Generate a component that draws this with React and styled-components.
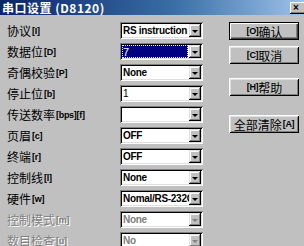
import React from "react";
import styled, { createGlobalStyle, css } from "styled-components";

const GlobalStyle = createGlobalStyle`
  html, body {
    margin: 0;
    padding: 0;
    background: #c0c0c0;
    overflow: hidden;
  }
`;

const Window = styled.div`
  width: 316px;
  height: 246px;
  background: #c0c0c0;
  font-family: "Noto Sans CJK SC", "Liberation Sans", sans-serif;
  font-size: 12px;
  color: #000;
`;

const TitleBar = styled.div`
  height: 15px;
  display: flex;
  align-items: center;
  justify-content: space-between;
  padding: 0 2px;
  background: linear-gradient(90deg, #0a246a 0%, #3a6ea5 55%, #a6caf0 100%);
`;

const Title = styled.div`
  color: #fff;
  font-weight: bold;
  font-size: 12px;
  line-height: 15px;
  letter-spacing: 0.5px;
  white-space: nowrap;
`;

const CloseButton = styled.div`
  width: 16px;
  height: 12px;
  margin-right: 8px;
  background: #c0c0c0;
  box-shadow: inset -1px -1px #000, inset 1px 1px #fff, inset -2px -2px #808080;
  font-family: "Liberation Sans", sans-serif;
  font-size: 10px;
  font-weight: bold;
  line-height: 12px;
  padding-left: 3px;
  box-sizing: border-box;
`;

const Body = styled.div`
  display: flex;
  align-items: flex-start;
  padding: 7px 0 0 7px;
`;

const Form = styled.div`
  display: grid;
  grid-template-columns: 113px 83px;
  grid-auto-rows: 17px;
  row-gap: 4px;
`;

const Label = styled.div`
  display: flex;
  align-items: center;
  white-space: nowrap;
  font-size: 12px;
  color: ${(p) => (p.$disabled ? "#808080" : "#000")};
  text-shadow: ${(p) => (p.$disabled ? "1px 1px 0 #fff" : "none")};
`;

const Key = styled.span`
  font-family: "Liberation Sans", sans-serif;
  font-size: 9px;
  font-weight: bold;
  letter-spacing: -0.3px;
  margin-left: 1px;
`;

const Select = styled.div`
  display: flex;
  align-items: stretch;
  background: #fff;
  padding: 2px;
  box-shadow: inset 1px 1px #808080, inset -1px -1px #fff, inset 2px 2px #000,
    inset -2px -2px #dfdfdf;
`;

const Value = styled.div`
  flex: 1;
  display: flex;
  align-items: center;
  padding-left: 1px;
  overflow: hidden;
  white-space: nowrap;
  font-family: "Liberation Sans", sans-serif;
  font-size: 10px;
  letter-spacing: -0.3px;
  font-weight: ${(p) => (p.$plain ? "normal" : "bold")};
  color: ${(p) => (p.$disabled ? "#808080" : "#000")};
  ${(p) =>
    p.$selected &&
    css`
      background: #000080;
      color: #fff;
      font-size: 11px;
      outline: 1px dotted #ffff80;
      outline-offset: -1px;
      margin-right: 1px;
    `}
`;

const Arrow = styled.div`
  width: 12px;
  flex: none;
  display: flex;
  align-items: center;
  justify-content: center;
  background: #c0c0c0;
  box-shadow: inset -1px -1px #000, inset 1px 1px #dfdfdf, inset -2px -2px #808080,
    inset 2px 2px #fff;
  &::after {
    content: "";
    border-left: 3px solid transparent;
    border-right: 3px solid transparent;
    border-top: 3px solid ${(p) => (p.$disabled ? "#808080" : "#000")};
    margin-top: 1px;
  }
`;

const Buttons = styled.div`
  display: flex;
  flex-direction: column;
  margin-left: 26px;
`;

const Button = styled.div`
  width: 70px;
  height: 18px;
  margin-top: ${(p) => p.$top}px;
  display: flex;
  align-items: center;
  justify-content: center;
  box-sizing: border-box;
  background: #c0c0c0;
  white-space: nowrap;
  font-size: 12px;
  box-shadow: ${(p) =>
    p.$default
      ? "inset 1px 1px #000, inset -1px -1px #000, inset 2px 2px #fff, inset -2px -2px #404040, inset -3px -3px #808080"
      : "inset 1px 1px #fff, inset -1px -1px #000, inset 2px 2px #dfdfdf, inset -2px -2px #808080"};
`;

const rows = [
  { label: "协议", key: "[I]", value: "RS instruction" },
  { label: "数据位", key: "[D]", value: "7", selected: true, plain: true },
  { label: "奇偶校验", key: "[P]", value: "None" },
  { label: "停止位", key: "[b]", value: "1", plain: true },
  { label: "传送数率", key: "[bps][f]", value: "" },
  { label: "页眉", key: "[c]", value: "OFF" },
  { label: "终端", key: "[r]", value: "OFF" },
  { label: "控制线", key: "[l]", value: "None" },
  { label: "硬件", key: "[w]", value: "Nomal/RS-232C" },
  { label: "控制模式", key: "[m]", value: "None", disabled: true },
  { label: "数目检查", key: "[u]", value: "No", disabled: true },
];

export default function App() {
  return (
    <Window>
      <GlobalStyle />
      <TitleBar>
        <Title>串口设置 (D8120)</Title>
        <CloseButton>×</CloseButton>
      </TitleBar>
      <Body>
        <Form>
          {rows.map((r) => (
            <React.Fragment key={r.label}>
              <Label $disabled={r.disabled}>
                {r.label}
                <Key>{r.key}</Key>
              </Label>
              <Select>
                <Value
                  $selected={r.selected}
                  $plain={r.plain}
                  $disabled={r.disabled}
                >
                  {r.value}
                </Value>
                <Arrow $disabled={r.disabled} />
              </Select>
            </React.Fragment>
          ))}
        </Form>
        <Buttons>
          <Button $top={0} $default>
            <Key>[O]</Key>确认
          </Button>
          <Button $top={6}>
            <Key>[C]</Key>取消
          </Button>
          <Button $top={14}>
            <Key>[H]</Key>帮助
          </Button>
          <Button $top={19}>
            全部清除<Key>[A]</Key>
          </Button>
        </Buttons>
      </Body>
    </Window>
  );
}
